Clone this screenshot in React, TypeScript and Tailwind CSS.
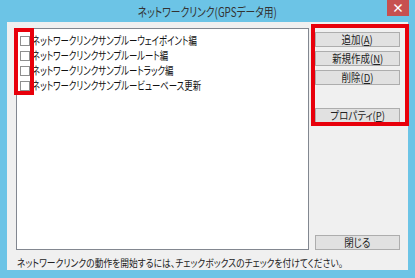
import React from 'react'

const items = [
  'ネットワークリンクサンプルーウェイポイント編',
  'ネットワークリンクサンプルールート編',
  'ネットワークリンクサンプルートラック編',
  'ネットワークリンクサンプルービューベース更新',
]

function Btn({ label, k, className = '' }: { label: string; k?: string; className?: string }) {
  return (
    <div
      className={`flex h-[15px] w-[85px] items-center justify-center border border-[#adadad] bg-[#e1e1e1] text-[11px] leading-none text-[#222] ${className}`}
    >
      <span className="inline-block scale-x-[0.86] whitespace-nowrap">
        {label}
        {k && (
          <>
            (<span className="underline underline-offset-1">{k}</span>)
          </>
        )}
      </span>
    </div>
  )
}

export default function App() {
  return (
    <div className="relative flex h-[278px] w-[415px] flex-col bg-[#6cc4e6] font-['Noto_Sans_CJK_JP',sans-serif] [font-feature-settings:'palt']">
      <div className="relative flex h-[22px] items-center justify-center pt-[2px] text-[12.5px] text-[#333]">
        <span className="inline-block scale-x-[0.78]">ネットワークリンク(GPSデータ用)</span>
        <div className="absolute right-[6px] top-0 flex h-[16px] w-[22px] items-center justify-center bg-[#c75050] text-[12px] font-bold leading-none text-white">
          ×
        </div>
      </div>
      <div className="mx-[7px] mb-[8px] flex flex-1 flex-col bg-[#f0f0f0]">
        <div className="flex h-[228px] gap-[6px] pl-[9px] pt-[6px]">
          <div className="h-[222px] w-[293px] border border-[#828790] bg-white pt-[4px]">
            {items.map((t) => (
              <div key={t} className="flex h-[15px] items-center gap-[2px] pl-[3px] text-[11.5px] text-[#111]">
                <div className="h-[10px] w-[10px] shrink-0 border border-[#8f8f8f] bg-white" />
                <span className="inline-block origin-left scale-x-[0.73] whitespace-nowrap">{t}</span>
              </div>
            ))}
          </div>
          <div className="flex w-[85px] flex-col gap-[4px] pt-[4px]">
            <Btn label="追加" k="A" />
            <Btn label="新規作成" k="N" />
            <Btn label="削除" k="D" />
            <Btn label="プロパティ" k="P" className="mt-[19px]" />
            <Btn label="閉じる" className="mt-auto" />
          </div>
        </div>
        <div className="pl-[10px] pt-[6px] text-[10.5px] leading-[14px] text-[#222]">
          <span className="inline-block origin-left scale-x-[0.835] whitespace-nowrap">
            ネットワークリンクの動作を開始するには、チェックボックスのチェックを付けてください。
          </span>
        </div>
      </div>
      <div className="absolute left-[14px] top-[28px] h-[67px] w-[20px] border-[4px] border-[#e8000b]" />
      <div className="absolute left-[311px] top-[24px] h-[102px] w-[98px] border-[4px] border-[#e8000b]" />
    </div>
  )
}
